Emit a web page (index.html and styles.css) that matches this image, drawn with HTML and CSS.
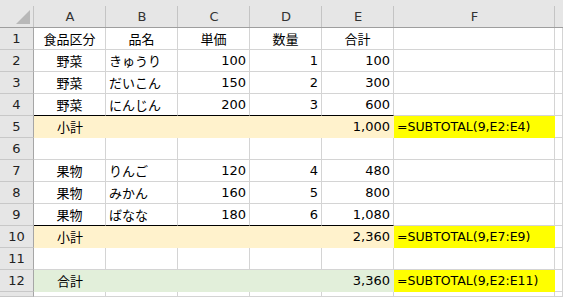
FILE: index.html
```html
<!DOCTYPE html>
<html lang="ja">
<head>
<meta charset="utf-8">
<title>SUBTOTAL</title>
<link rel="stylesheet" href="styles.css">
</head>
<body>
<div class="sheet">
  <div class="corner"><svg width="34" height="28" viewBox="0 0 34 28"><polygon points="16,24 30,24 30,10" fill="#b8b8b8"/></svg></div>
  <div class="ch">A</div><div class="ch">B</div><div class="ch">C</div><div class="ch">D</div><div class="ch">E</div><div class="ch">F</div><div class="ch last"></div>

  <div class="rh">1</div>
  <div class="c ctr">食品区分</div><div class="c ctr">品名</div><div class="c ctr">単価</div><div class="c ctr">数量</div><div class="c ctr">合計</div><div class="c"></div><div class="c"></div>

  <div class="rh">2</div>
  <div class="c ctr">野菜</div><div class="c">きゅうり</div><div class="c num">100</div><div class="c num">1</div><div class="c num">100</div><div class="c"></div><div class="c"></div>

  <div class="rh">3</div>
  <div class="c ctr">野菜</div><div class="c">だいこん</div><div class="c num">150</div><div class="c num">2</div><div class="c num">300</div><div class="c"></div><div class="c"></div>

  <div class="rh">4</div>
  <div class="c ctr thick">野菜</div><div class="c thick">にんじん</div><div class="c num thick">200</div><div class="c num thick">3</div><div class="c num thick">600</div><div class="c"></div><div class="c"></div>

  <div class="rh">5</div>
  <div class="c sub ind">小計</div><div class="c sub"></div><div class="c sub"></div><div class="c sub"></div><div class="c sub num">1,000</div><div class="c yel">=SUBTOTAL(9,E2:E4)</div><div class="c"></div>

  <div class="rh">6</div>
  <div class="c"></div><div class="c"></div><div class="c"></div><div class="c"></div><div class="c"></div><div class="c"></div><div class="c"></div>

  <div class="rh">7</div>
  <div class="c ctr">果物</div><div class="c">りんご</div><div class="c num">120</div><div class="c num">4</div><div class="c num">480</div><div class="c"></div><div class="c"></div>

  <div class="rh">8</div>
  <div class="c ctr">果物</div><div class="c">みかん</div><div class="c num">160</div><div class="c num">5</div><div class="c num">800</div><div class="c"></div><div class="c"></div>

  <div class="rh">9</div>
  <div class="c ctr thick">果物</div><div class="c thick">ばなな</div><div class="c num thick">180</div><div class="c num thick">6</div><div class="c num thick">1,080</div><div class="c"></div><div class="c"></div>

  <div class="rh">10</div>
  <div class="c sub ind">小計</div><div class="c sub"></div><div class="c sub"></div><div class="c sub"></div><div class="c sub num">2,360</div><div class="c yel">=SUBTOTAL(9,E7:E9)</div><div class="c"></div>

  <div class="rh">11</div>
  <div class="c"></div><div class="c"></div><div class="c"></div><div class="c"></div><div class="c"></div><div class="c"></div><div class="c"></div>

  <div class="rh">12</div>
  <div class="c tot ind">合計</div><div class="c tot"></div><div class="c tot"></div><div class="c tot"></div><div class="c tot num">3,360</div><div class="c yel">=SUBTOTAL(9,E2:E11)</div><div class="c"></div>

  <div class="rh"></div>
  <div class="c"></div><div class="c"></div><div class="c"></div><div class="c"></div><div class="c"></div><div class="c"></div><div class="c"></div>
</div>
</body>
</html>
```
FILE: styles.css
```css
html, body {
  margin: 0;
  padding: 0;
  overflow: hidden;
  background: #ffffff;
}

.sheet {
  display: grid;
  grid-template-columns: 34px 72px 72px 72px 72px 72px 161px 8px;
  grid-template-rows: 28px repeat(12, 22px) 5px;
  width: 563px;
  height: 297px;
  overflow: hidden;
  font-family: "DejaVu Sans", "Noto Sans CJK JP", sans-serif;
  font-size: 13px;
  color: #000;
}

.corner,
.ch {
  box-sizing: border-box;
  background: linear-gradient(#c4c4c4, #c4c4c4) right 6px / 1px calc(100% - 6px) no-repeat, #e6e6e6;
  border-bottom: 1px solid #9e9e9e;
}

.corner {
  display: block;
}

.corner svg {
  display: block;
}

.ch {
  display: flex;
  align-items: center;
  justify-content: center;
  padding-top: 5px;
  color: #333;
}

.ch.last {
  background: #e6e6e6;
}

.rh {
  box-sizing: border-box;
  display: flex;
  align-items: center;
  justify-content: center;
  background: #e6e6e6;
  border-right: 1px solid #a6a6a6;
  border-bottom: 1px solid #c8c8c8;
  color: #222;
}

.c {
  box-sizing: border-box;
  display: flex;
  align-items: center;
  padding: 0 3px;
  border-right: 1px solid #d4d4d4;
  border-bottom: 1px solid #d4d4d4;
  white-space: nowrap;
  overflow: hidden;
}

.ctr {
  justify-content: center;
}

.num {
  justify-content: flex-end;
}

.ind {
  padding-left: 23px;
}

.thick {
  border-bottom-color: #000;
}

.sub {
  background: #fff2cc;
  border-color: #fff2cc;
}

.tot {
  background: #e2efda;
  border-color: #e2efda;
}

.yel {
  background: #ffff00;
  border-color: #ffff00;
  font-size: 12.5px;
}
```
